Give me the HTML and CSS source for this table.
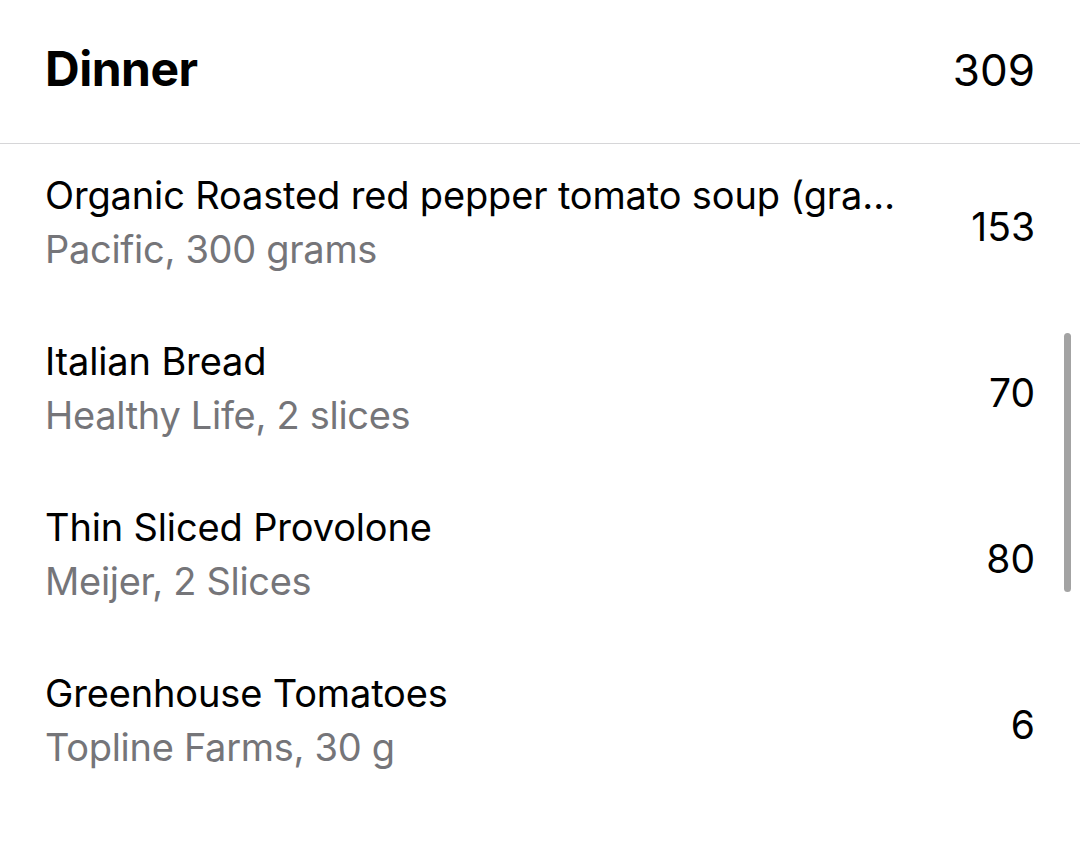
FILE: index.html
```html
<!DOCTYPE html>
<html lang="en">
<head>
<meta charset="utf-8">
<title>Dinner</title>
<link rel="stylesheet" href="styles.css">
</head>
<body>
<div class="screen">
  <header class="meal-header">
    <h1 class="meal-title">Dinner</h1>
    <span class="meal-total">309</span>
  </header>
  <ul class="food-list">
    <li class="food-row">
      <div class="food-text">
        <div class="food-name">Organic Roasted red pepper tomato soup (gra…</div>
        <div class="food-detail">Pacific, 300 grams</div>
      </div>
      <span class="food-cal">153</span>
    </li>
    <li class="food-row">
      <div class="food-text">
        <div class="food-name">Italian Bread</div>
        <div class="food-detail">Healthy Life, 2 slices</div>
      </div>
      <span class="food-cal">70</span>
    </li>
    <li class="food-row">
      <div class="food-text">
        <div class="food-name">Thin Sliced Provolone</div>
        <div class="food-detail">Meijer, 2 Slices</div>
      </div>
      <span class="food-cal">80</span>
    </li>
    <li class="food-row">
      <div class="food-text">
        <div class="food-name">Greenhouse Tomatoes</div>
        <div class="food-detail">Topline Farms, 30 g</div>
      </div>
      <span class="food-cal">6</span>
    </li>
  </ul>
  <div class="scroll-indicator"></div>
</div>
</body>
</html>
```
FILE: styles.css
```css
html, body {
  margin: 0;
  padding: 0;
  background: #ffffff;
}

body {
  font-family: Inter, "Liberation Sans", sans-serif;
  color: #000000;
}

.screen {
  position: relative;
  width: 1080px;
  height: 851px;
  overflow: hidden;
  background: #ffffff;
}

.meal-header {
  display: flex;
  align-items: baseline;
  justify-content: space-between;
  padding: 40px 45px 44px 45px;
  border-bottom: 1px solid #d6d6d8;
}

.meal-title {
  margin: 0;
  font-size: 48px;
  line-height: 58px;
  font-weight: 700;
  letter-spacing: -0.5px;
}

.meal-total {
  font-size: 44px;
  line-height: 58px;
  font-weight: 400;
}

.food-list {
  list-style: none;
  margin: 0;
  padding: 0;
}

.food-row {
  display: flex;
  align-items: center;
  justify-content: space-between;
  padding: 24px 45px 34px 45px;
}

.food-text {
  display: flex;
  flex-direction: column;
  min-width: 0;
}

.food-name {
  font-size: 38px;
  line-height: 54px;
  letter-spacing: -0.15px;
  white-space: nowrap;
  overflow: hidden;
}

.food-detail {
  font-size: 38px;
  line-height: 54px;
  letter-spacing: -0.3px;
  color: #757579;
  white-space: nowrap;
}

.food-cal {
  font-size: 39px;
  line-height: 54px;
  padding-top: 10px;
}

.scroll-indicator {
  position: absolute;
  left: 1064px;
  top: 333px;
  width: 7px;
  height: 259px;
  border-radius: 4px;
  background: #a3a3a3;
}
```
